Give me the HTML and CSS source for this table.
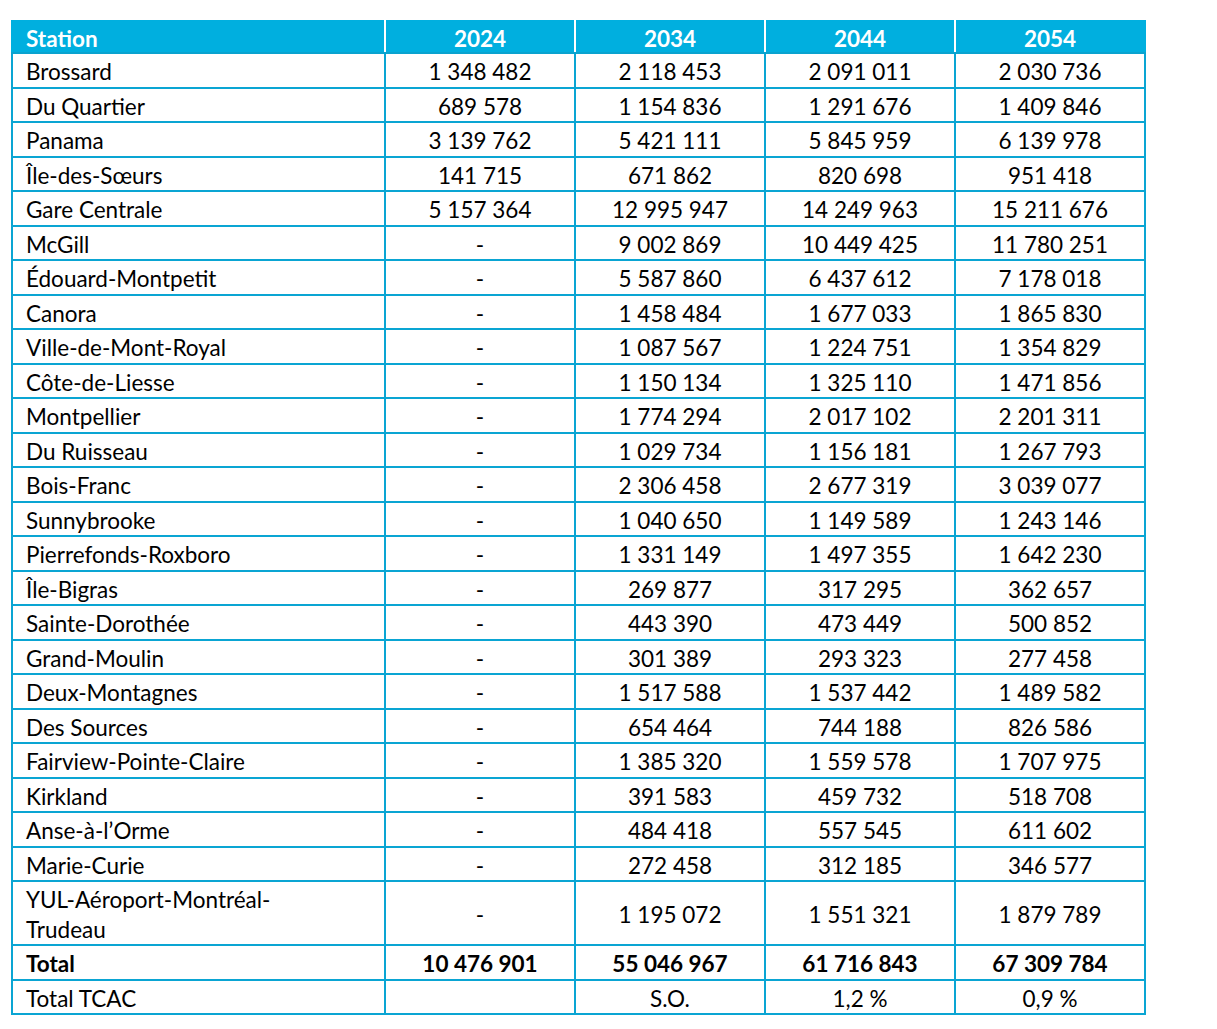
FILE: index.html
```html
<!DOCTYPE html>
<html lang="fr">
<head>
<meta charset="utf-8">
<title>Achalandage par station</title>
<link rel="stylesheet" href="styles.css">
</head>
<body>
<table class="ridership">
  <colgroup>
    <col class="c-station">
    <col class="c-year"><col class="c-year"><col class="c-year"><col class="c-year">
  </colgroup>
  <thead>
    <tr><th class="name">Station</th><th>2024</th><th>2034</th><th>2044</th><th>2054</th></tr>
  </thead>
  <tbody>
    <tr><td class="name">Brossard</td><td>1 348 482</td><td>2 118 453</td><td>2 091 011</td><td>2 030 736</td></tr>
    <tr><td class="name">Du Quartier</td><td>689 578</td><td>1 154 836</td><td>1 291 676</td><td>1 409 846</td></tr>
    <tr><td class="name">Panama</td><td>3 139 762</td><td>5 421 111</td><td>5 845 959</td><td>6 139 978</td></tr>
    <tr><td class="name">Île-des-Sœurs</td><td>141 715</td><td>671 862</td><td>820 698</td><td>951 418</td></tr>
    <tr><td class="name">Gare Centrale</td><td>5 157 364</td><td>12 995 947</td><td>14 249 963</td><td>15 211 676</td></tr>
    <tr><td class="name">McGill</td><td>-</td><td>9 002 869</td><td>10 449 425</td><td>11 780 251</td></tr>
    <tr><td class="name">Édouard-Montpetit</td><td>-</td><td>5 587 860</td><td>6 437 612</td><td>7 178 018</td></tr>
    <tr><td class="name">Canora</td><td>-</td><td>1 458 484</td><td>1 677 033</td><td>1 865 830</td></tr>
    <tr><td class="name">Ville-de-Mont-Royal</td><td>-</td><td>1 087 567</td><td>1 224 751</td><td>1 354 829</td></tr>
    <tr><td class="name">Côte-de-Liesse</td><td>-</td><td>1 150 134</td><td>1 325 110</td><td>1 471 856</td></tr>
    <tr><td class="name">Montpellier</td><td>-</td><td>1 774 294</td><td>2 017 102</td><td>2 201 311</td></tr>
    <tr><td class="name">Du Ruisseau</td><td>-</td><td>1 029 734</td><td>1 156 181</td><td>1 267 793</td></tr>
    <tr><td class="name">Bois-Franc</td><td>-</td><td>2 306 458</td><td>2 677 319</td><td>3 039 077</td></tr>
    <tr><td class="name">Sunnybrooke</td><td>-</td><td>1 040 650</td><td>1 149 589</td><td>1 243 146</td></tr>
    <tr><td class="name">Pierrefonds-Roxboro</td><td>-</td><td>1 331 149</td><td>1 497 355</td><td>1 642 230</td></tr>
    <tr><td class="name">Île-Bigras</td><td>-</td><td>269 877</td><td>317 295</td><td>362 657</td></tr>
    <tr><td class="name">Sainte-Dorothée</td><td>-</td><td>443 390</td><td>473 449</td><td>500 852</td></tr>
    <tr><td class="name">Grand-Moulin</td><td>-</td><td>301 389</td><td>293 323</td><td>277 458</td></tr>
    <tr><td class="name">Deux-Montagnes</td><td>-</td><td>1 517 588</td><td>1 537 442</td><td>1 489 582</td></tr>
    <tr><td class="name">Des Sources</td><td>-</td><td>654 464</td><td>744 188</td><td>826 586</td></tr>
    <tr><td class="name">Fairview-Pointe-Claire</td><td>-</td><td>1 385 320</td><td>1 559 578</td><td>1 707 975</td></tr>
    <tr><td class="name">Kirkland</td><td>-</td><td>391 583</td><td>459 732</td><td>518 708</td></tr>
    <tr><td class="name">Anse-à-l’Orme</td><td>-</td><td>484 418</td><td>557 545</td><td>611 602</td></tr>
    <tr><td class="name">Marie-Curie</td><td>-</td><td>272 458</td><td>312 185</td><td>346 577</td></tr>
    <tr><td class="name">YUL-Aéroport-Montréal-<br>Trudeau</td><td>-</td><td>1 195 072</td><td>1 551 321</td><td>1 879 789</td></tr>
    <tr class="total"><td class="name">Total</td><td>10 476 901</td><td>55 046 967</td><td>61 716 843</td><td>67 309 784</td></tr>
    <tr><td class="name">Total TCAC</td><td></td><td>S.O.</td><td>1,2 %</td><td>0,9 %</td></tr>
  </tbody>
</table>
</body>
</html>
```

FILE: styles.css
```css
html, body {
  margin: 0;
  padding: 0;
  background: #ffffff;
}

body {
  padding: 20px 0 0 11px;
  font-family: Lato, "Open Sans", "Liberation Sans", sans-serif;
  font-size: 22.5px;
  color: #000000;
}

.ridership {
  border-collapse: collapse;
  table-layout: fixed;
  width: 1133px;
}

.c-station { width: 373px; }
.c-year { width: 190px; }

.ridership th {
  background: #00afdf;
  color: #ffffff;
  font-weight: 700;
  text-align: center;
  padding: 6px 6px 1px;
  line-height: 25px;
  border-left: 2px solid #ffffff;
  border-right: 2px solid #ffffff;
  border-bottom: 2px solid #0aa3cf;
  border-top: none;
}

.ridership th:first-child { border-left: 2px solid #00afdf; }
.ridership th:last-child { border-right: 2px solid #00afdf; }

.ridership td {
  border: 2px solid #0aa5d3;
  text-align: center;
  padding: 3px 6px 0;
  line-height: 29.5px;
  white-space: nowrap;
}

.ridership .name {
  text-align: left;
  padding-left: 13px;
}

.ridership .total td {
  font-weight: 700;
}
```
